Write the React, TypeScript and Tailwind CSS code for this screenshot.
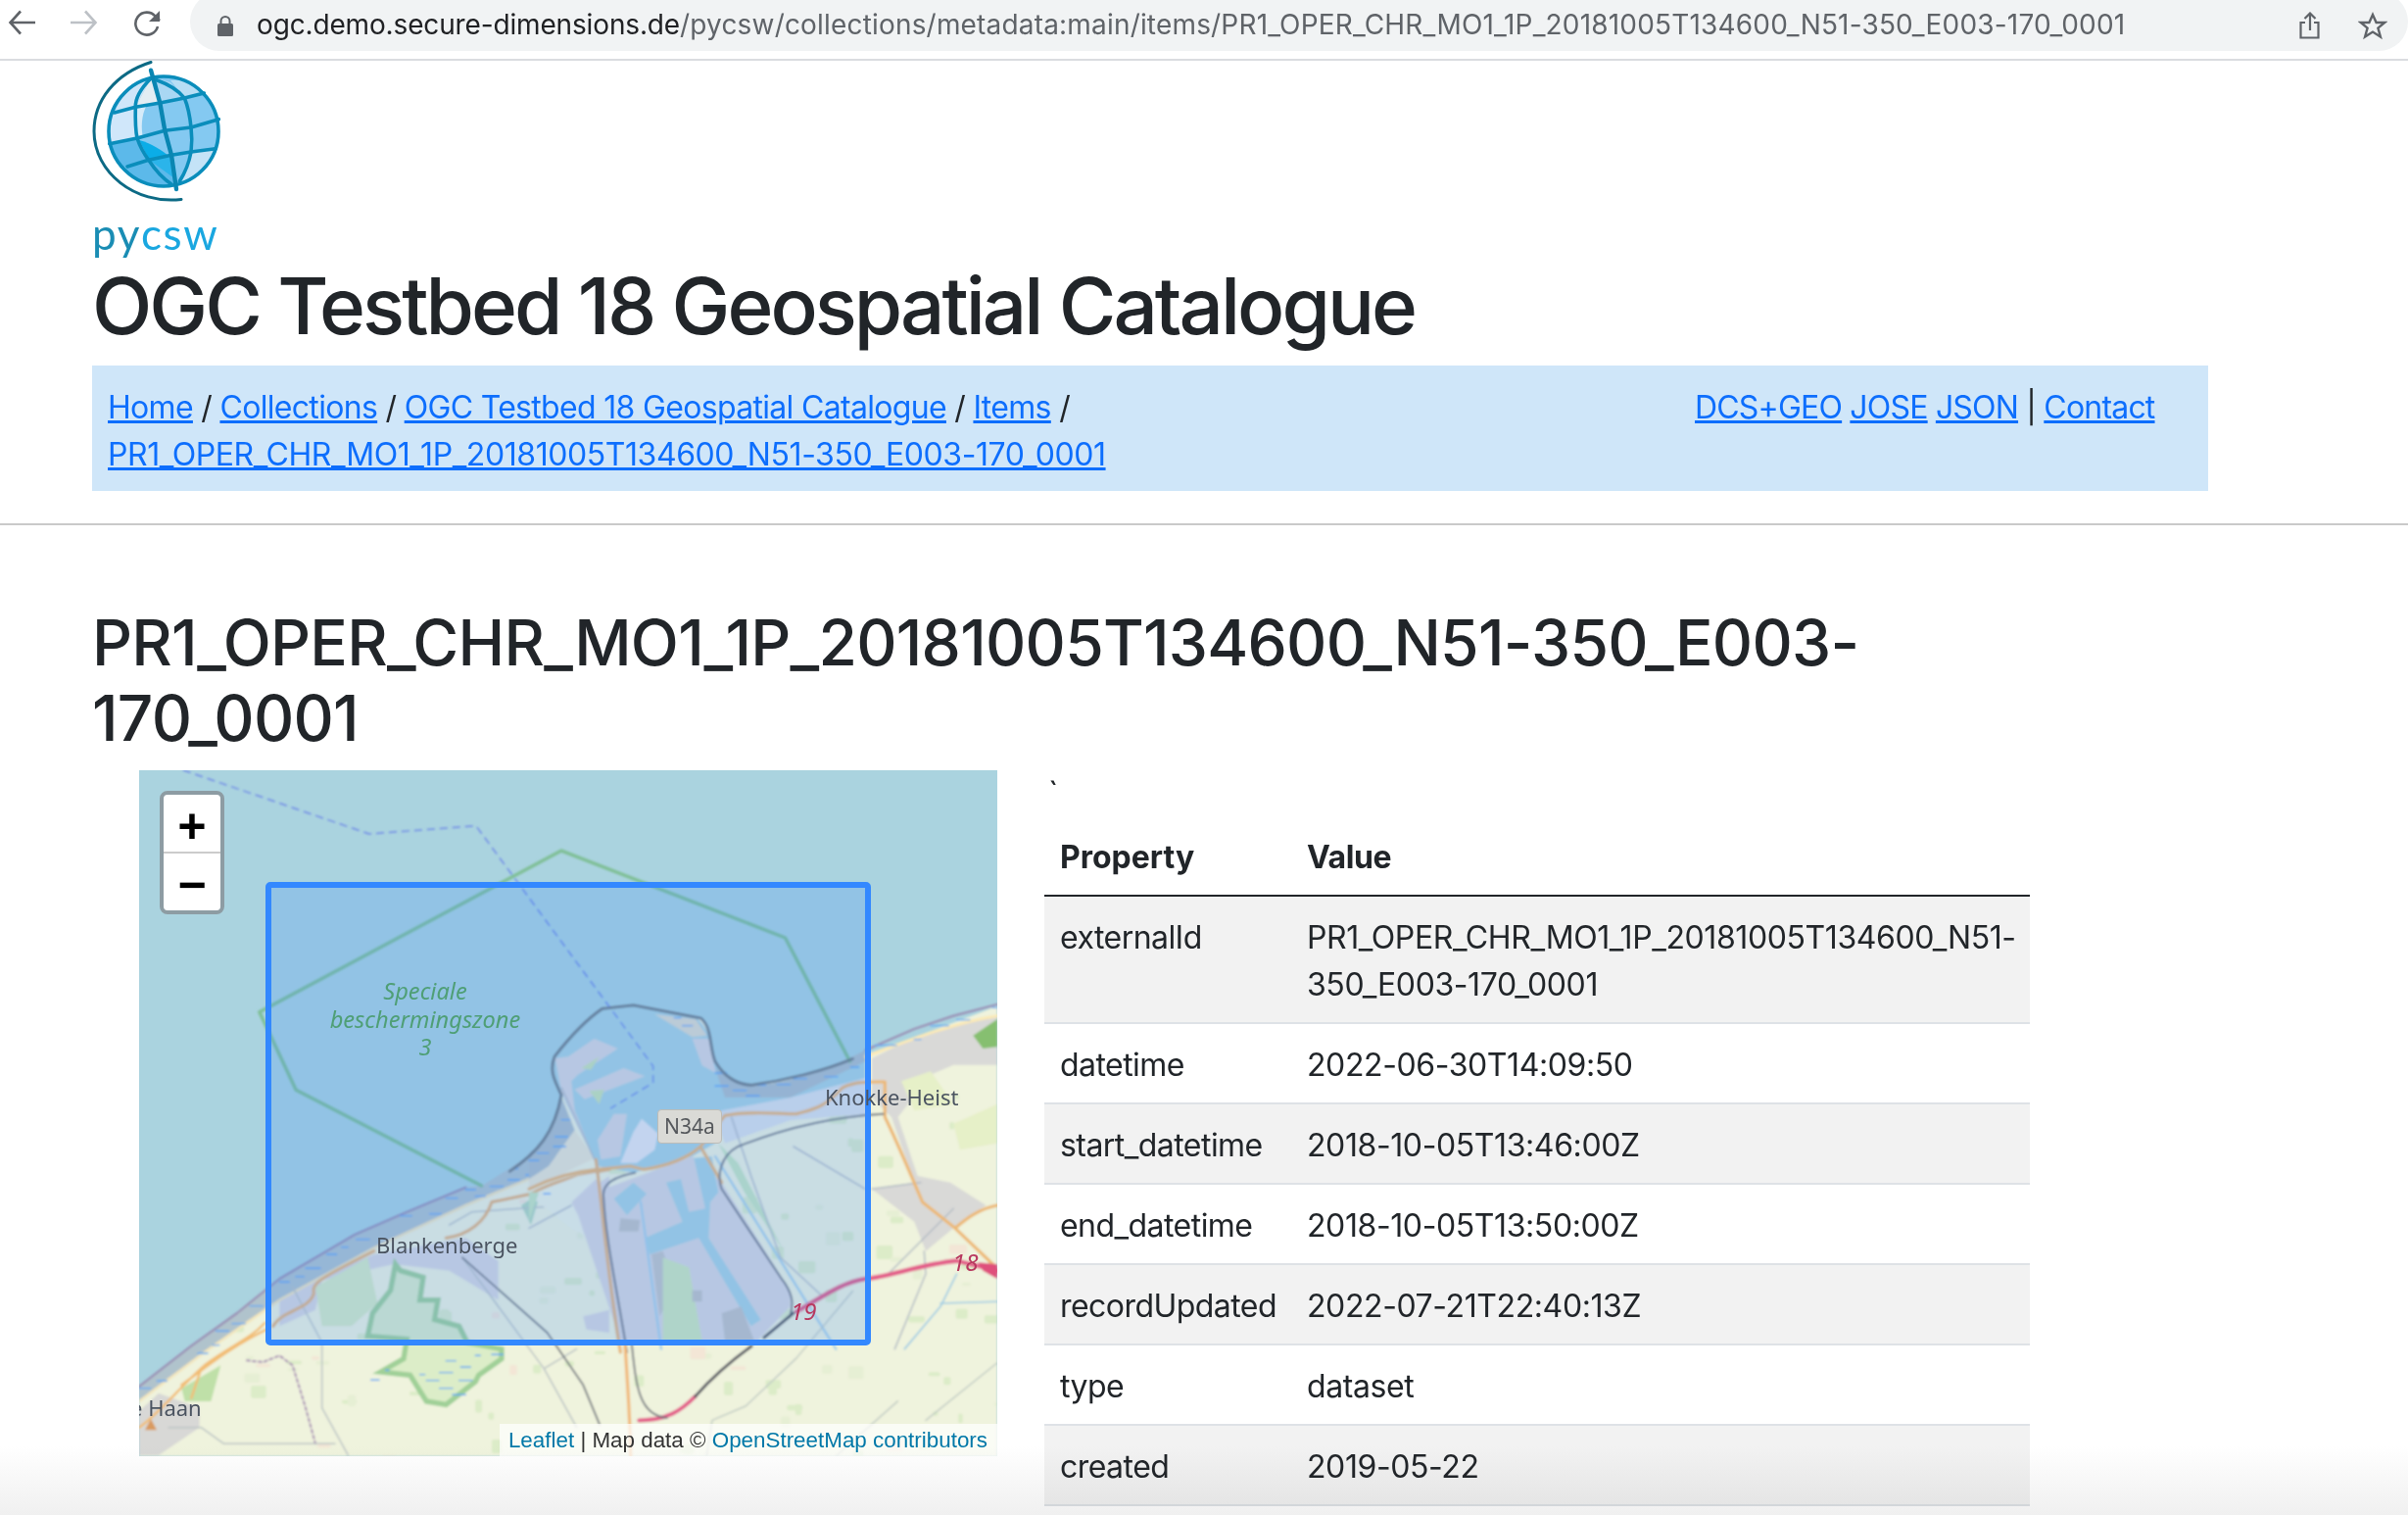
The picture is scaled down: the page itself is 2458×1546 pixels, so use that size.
const FONT = "font-['Inter','Liberation_Sans',sans-serif]";

const ROWS = [
  ["externalId", "PR1_OPER_CHR_MO1_1P_20181005T134600_N51-350_E003-170_0001"],
  ["datetime", "2022-06-30T14:09:50"],
  ["start_datetime", "2018-10-05T13:46:00Z"],
  ["end_datetime", "2018-10-05T13:50:00Z"],
  ["recordUpdated", "2022-07-21T22:40:13Z"],
  ["type", "dataset"],
  ["created", "2019-05-22"],
];

// little land-use blobs scattered over the map
const PATCHES: { x: number; y: number; w: number; h: number; c: string }[] = [];
let seed = 17;
const rnd = () => {
  seed = (seed * 16807) % 2147483647;
  return seed / 2147483647;
};
for (let i = 0; i < 150; i++) {
  const k = rnd();
  PATCHES.push({
    x: rnd() * 876,
    y: 330 + rnd() * 370,
    w: 4 + rnd() * 14,
    h: 3 + rnd() * 11,
    c: k < 0.75 ? "#dcecc8" : k < 0.9 ? "#e6efd4" : "#f3e6d6",
  });
}

const LAND =
  "M21 1300 250 1100 440 975 630 880 680 850C730 810 760 770 772 690 760 660 750 640 760 610 790 565 820 530 845 510L900 503 1020 530C1040 550 1035 590 1045 620 1060 650 1080 668 1110 670 1170 660 1240 640 1290 615L1400 570 1547 505V1445H21Z";

function Line({ d, c, w, dash }: { d: string; c: string; w: number; dash?: string }) {
  return <path d={d} fill="none" stroke={c} strokeWidth={w} strokeDasharray={dash} strokeLinecap="round" strokeLinejoin="round" vectorEffect="non-scaling-stroke" />;
}

function BrowserBar() {
  return (
    <div className="flex h-[62px] border-b-2 border-[#dadce0] bg-white overflow-hidden">
      <div className="flex w-[194px] shrink-0 items-start pt-[10px] pl-[8px] gap-[36px]">
        <svg width="28" height="26" viewBox="0 0 28 26" fill="none" stroke="#5f6368" strokeWidth="2.6">
          <path d="M28 13H3M13 1.5 2.5 13 13 24.5" />
        </svg>
        <svg width="28" height="26" viewBox="0 0 28 26" fill="none" stroke="#bdc1c6" strokeWidth="2.6">
          <path d="M0 13h25M15 1.5 25.5 13 15 24.5" />
        </svg>
        <svg width="28" height="27" viewBox="0 0 28 27" fill="none" stroke="#5f6368" strokeWidth="2.6">
          <path d="M25 17a11.5 11.5 0 1 1-2.5-10.5L27 11" />
          <path d="M27 1v11H16" fill="#5f6368" stroke="none" />
        </svg>
      </div>
      <div className="flex h-[60px] flex-1 -mt-2 items-center rounded-full bg-[#f1f3f4] pt-2 pl-[28px] pr-[20px]">
        <svg width="16" height="21" viewBox="0 0 16 21" className="shrink-0">
          <rect x="0" y="8" width="16" height="13" rx="1.5" fill="#5f6368" />
          <path d="M3.5 9V5.5a4.5 4.5 0 0 1 9 0V9" fill="none" stroke="#5f6368" strokeWidth="2" />
        </svg>
        <div className={`ml-[24px] -mt-[3px] flex-1 whitespace-nowrap text-[28px] tracking-[0.18px] text-[#5f6368] ${FONT}`}>
          <span className="tracking-[-0.15px] text-[#202124]">ogc.demo.secure-dimensions.de</span>
          /pycsw/collections/metadata:main/items/PR1_OPER_CHR_MO1_1P_20181005T134600_N51-350_E003-170_0001
        </div>
        <svg width="24" height="28" viewBox="0 0 24 28" fill="none" stroke="#5f6368" strokeWidth="2.2" className="shrink-0">
          <path d="M7 11H2.5v15.5h18V11H16M12 19V2M6.5 7 12 1.5 17.5 7" />
        </svg>
        <svg width="30" height="29" viewBox="0 0 30 29" fill="none" stroke="#5f6368" strokeWidth="2.4" className="ml-[37px] mr-[1px] shrink-0">
          <path d="m15 3 3.6 8h8.6l-6.8 5.6 2.5 8.9L15 20.6l-7.9 4.9 2.5-8.9L2.8 11h8.6z" />
        </svg>
      </div>
    </div>
  );
}

function Logo() {
  return (
    <div className="flex flex-col">
      <svg width="134" height="146" viewBox="0 0 134 146">
        <defs>
          <clipPath id="globe">
            <circle cx="73" cy="72" r="57" />
          </clipPath>
        </defs>
        <path d="M60 1.5C24 13 2 40 2 72c0 42 42 75 89 69.5" fill="none" stroke="#0c6a85" strokeWidth="3" strokeLinecap="round" />
        <g clipPath="url(#globe)">
          <rect x="0" y="0" width="134" height="146" fill="#84c9f1" />
          <path d="M22.7 53 44.3 47.3 60 18C40 24 28 38 22.7 53Z" fill="#cfe6f9" />
          <path d="M22.7 53 44.3 47.3 46 79 10 86 14 62Z" fill="#d0e7fa" />
          <path d="M60 18 44.3 47.3 69.3 43 62 12Z" fill="#e3edf3" />
          <path d="M66 18 69.3 43 94.3 38 80 22Z" fill="#a9d7f3" />
          <path d="M94.3 38 114 33 96 20 80 20Z" fill="#b7def5" />
          <path d="M44.3 47.3 56 45C50 55 50 70 52 78L46 79Z" fill="#d6ebf9" />
          <path d="M10 86 46 79 57.7 101.3 36 108 20 110Z" fill="#5cb9ea" />
          <path d="M28 112 57.7 101.3 81 126 60 132Z" fill="#5cb9ea" />
          <path d="M57.7 101.3 81 96.3 86 131 81 126Z" fill="#5cb9ea" />
          <path d="M48 81C60 84 72 92 78 97L58 101Z" fill="#0bade7" />
          <path d="M58 101 80 97 84 120Z" fill="#2bb4ea" />
          <path d="M89 123 101 93 126 90 108 122Z" fill="#c4e3f7" />
        </g>
        <g fill="none" stroke="#0a8dbb" strokeWidth="3.6" strokeLinecap="round" strokeLinejoin="round">
          <circle cx="73" cy="72" r="56" />
          <path d="M60 18C50 28 44 38 44.3 47.3 44 60 44 70 46 79 49 88 53 95 57.7 101.3 64 111 72 120 81 126" />
          <path d="M66 19.7C78 24 88 30 94.3 38 98 47 100 58 101 68 102 76 102 85 101 93 99 104 95 114 89.3 123" />
          <path d="M22.7 53 44.3 47.3 69.3 43 94.3 38 114.3 33" />
          <path d="M17.7 84.7 46 79 74.3 71.3 101 68 129.3 59.7" />
          <path d="M36 108 57.7 101.3 81 96.3 101 93 126 89.7" />
        </g>
        <path d="M60 9.7 69.3 43 74.3 71.3 81 96.3 86 131" fill="none" stroke="#0a86b2" strokeWidth="4.4" strokeLinecap="round" strokeLinejoin="round" />
      </svg>
      <div className="flex h-[56px] pt-[6px] font-['Lato',sans-serif] text-[44px] leading-[48px] font-normal tracking-[1.6px]">
        <span className="text-[#1a8db4]">py</span>
        <span className="text-[#1aa7e0]">csw</span>
      </div>
    </div>
  );
}

function MapDrawing() {
  return (
    <svg width="876" height="700" viewBox="0 0 876 700" className="block">
      <defs>
        <filter id="soft" x="-5%" y="-5%" width="110%" height="110%">
          <feGaussianBlur stdDeviation="0.9" />
        </filter>
        <clipPath id="landclip">
          <path d={LAND} transform="scale(0.574 0.4885) translate(-21 -12)" />
        </clipPath>
      </defs>
      <g filter="url(#soft)">
        <g transform="scale(0.574 0.4885) translate(-21 -12)">
          <path d={LAND} fill="#eff3dd" />
        </g>
        <g clipPath="url(#landclip)">
          {PATCHES.map((p, i) => (
            <rect key={i} x={p.x} y={p.y} width={p.w} height={p.h} rx="2" fill={p.c} />
          ))}
        </g>

        {/* De Haan, dunes and the forest at the left */}
        <g transform="translate(0 394) scale(0.3333)">
          <path d="M0 780 60 725 185 770V830L60 915H0Z" fill="#d8d8d6" />
          <path d="M130 710 250 640 220 750 140 750Z" fill="#bfe0a8" />
          <path d="M430 420 720 300 1000 250 1100 320V440L950 350 780 330 560 380 540 470 430 520Z" fill="#d9d8dd" />
          <path d="M1340 130 1440 60V280L1390 240ZM1360 490 1440 470V540L1370 530Z" fill="#d9d8dd" />
          <path d="M540 400 700 310 730 450 650 520 560 520Z" fill="#d8ebc3" />
          <path d="M1170 150 1230 110 1200 210Z" fill="#b2d8bd" />
          <path d="M0 705 160 580 300 480 430 375 660 240 810 175 1000 95 1050 90 1130 40 1190 0H1280L1240 50 1000 150 720 280 430 440 200 600 0 750Z" fill="#b0c3cc" />
          <path d="M0 750 200 600 430 440 720 280 1000 150 1240 50" fill="none" stroke="#f3e6bd" strokeWidth="8" />
          <path
            d="M785 330 800 350 870 370 860 440 915 440 905 500 980 520 1005 570 1110 590 1110 620 1040 670 1030 690 940 760 880 750 830 670 740 660 810 620 820 560 700 550 715 480 770 410Z"
            fill="#dcedc8"
            stroke="#a0d098"
            strokeWidth="16"
          />
          <Line d="M330 625 380 630 430 610 470 640 510 770 540 880" c="#a88fb4" w="2" dash="3 3" />
          <Line d="M0 705 160 580 300 480 430 375 660 240 810 175 1000 95" c="#9a8fb4" w="2.2" />
          <Line d="M470 400 560 570 560 770 640 915M990 310 1240 650 1340 830M1240 650 1340 590M90 830 190 830 260 880 600 880M950 210 1020 170 1310 150" c="#bcc4c4" w="1.5" />
          <Line d="M990 310 1250 540 1360 700 1410 820" c="#70747c" w="1.8" />
          <Line d="M0 830C60 790 130 700 200 640 280 580 340 560 385 510M130 700C200 650 270 590 390 530M190 650 160 740" c="#f2bd74" w="2.4" />
          <Line d="M410 520C440 470 520 470 535 420 530 390 540 380 720 290M940 250C1010 240 1060 200 1080 140L1200 115C1280 70 1380 50 1440 40" c="#e6b67c" w="3.2" />
          <Line d="M0 710H35M55 688H85M180 603H210M225 578H245M235 535H275M285 512H325M340 458H378M430 385H460M480 368H505M510 343H555M575 300H605M620 278H640M665 254H705M800 182H835M890 176H925M940 128H975M1000 102H1030M1030 122H1060M1075 92H1115M1130 72H1165M1145 38H1160M1185 57H1200M1240 115H1255" c="#5aa6f4" w="1.4" />
          <Line d="M710 685H735M755 655H765M860 668H875M920 662H960M985 645H1015M880 686H918M920 710H960M960 730H1000M980 686H1020M940 626H970M1080 607H1115M1030 610H1045" c="#5aa6f4" w="1.4" />
          <path d="M18 838 36 804 54 838Z" fill="#d99a5e" />
        </g>

        {/* the port of Zeebrugge and Knokke */}
        <g transform="translate(398 214) scale(0.3333)">
          <path d="M1050 240 1190 170 1434 110V260L1300 260 1230 290 1130 420 1190 600 1290 620 1400 690 1300 760 1215 830 1180 740 1050 640 1180 620 1110 420 1050 360Z" fill="#d9d9d7" />
          <path d="M1140 310 1230 280 1300 380 1180 400ZM1300 440 1434 380V500L1320 520Z" fill="#e6f0c8" />
          <path d="M1360 170 1434 120V205L1390 210Z" fill="#86bf70" />
          <path d="M100 350C80 300 60 270 75 230L220 88 320 78 510 115C545 140 560 190 570 240L600 300 680 340 900 300 1030 240V300L900 390 600 400 570 500 500 540 320 590 210 570Z" fill="#aad3df" />
          <path d="M100 360 140 460 60 570 0 610V530C40 510 80 430 100 360ZM570 270C600 290 640 320 690 322 780 320 900 280 1030 215V250L800 360H600Z" fill="#aebfc8" />
          <path d="M140 460 200 545 0 645V610L60 570Z" fill="#e9e6d2" />
          <path d="M590 400 800 360 1030 300V410L800 430 600 500 570 420Z" fill="#dbe1e6" />
          <path d="M80 240 120 235 200 180 272 210 150 290 130 310 140 400 205 560 100 345Z" fill="#d9d8dd" />
          <path d="M140 335 290 270 355 295 170 365Z" fill="#d9d8dd" />
          <path d="M160 270 215 235 190 275ZM185 340 230 335 215 380Z" fill="#c9e4b6" />
          <path d="M210 490 260 410 300 410 280 540 220 550Z" fill="#d9d8dd" />
          <path d="M320 465 345 425 395 470 385 520 330 560 280 560Z" fill="#e8e8ec" />
          <path d="M385 105 510 120 545 170 500 175Z" fill="#dedccd" />
          <path d="M500 180 550 180 572 285 530 262Z" fill="#d9d8dd" />
          <path d="M0 660 150 600 205 590 180 720 220 810 130 760Z" fill="#eef3e2" />
          <path d="M230 640 500 540 590 620 800 950V1000L700 1105H280L150 720 130 680 205 610Z" fill="#d9d8dd" />
          <path d="M505 545 560 540 580 650 555 680 550 790 710 1040 680 1060 520 790 370 840 355 790 470 740 420 620 465 610 490 710 540 700Z" fill="#aad3df" />
          <path d="M320 620 360 655 300 720 260 670Z" fill="#aad3df" />
          <path d="M375 840 410 830 450 940 400 1030Z" fill="#c4c6c6" />
          <path d="M410 850 490 880 530 1105H410Z" fill="#cfe8bc" />
          <path d="M590 1020 650 1000 690 1105H600ZM500 950 530 950 530 985 500 985ZM280 730 340 735 335 770 275 770Z" fill="#c2c4c4" />
          <path d="M0 650 30 650 0 740ZM580 500 640 560 780 830 660 650Z" fill="#c8e6c0" />
          <Line d="M342 680 405 1130M570 540 940 1130" c="#a9d1e6" w="2.4" />
          <Line d="M620 420 680 600 770 850 900 970M810 510 1030 640M1050 640 1200 620M1300 700 1100 900M1210 830 1215 900 1120 1130M100 330 210 570M0 760 130 690" c="#b4bcc4" w="1.5" />
          <Line d="M1310 900 1260 1000 1150 1130M1260 990 1434 985" c="#9ccbe4" w="1.6" />
          <Line d="M1030 235C1150 190 1300 130 1434 110" c="#fbe9b6" w="3" />
          <Line d="M1030 215 1180 150 1300 110 1434 75" c="#9a8fb4" w="2.2" />
          <Line d="M1060 200H1125M1180 182H1200M1230 140H1285M1310 122H1350M1420 85H1434M570 285H605M570 325H610M625 338H665M665 355H705M690 322H725M760 320H800M810 302H850M905 296H945M985 267H1010M445 116H465M470 140H500M100 428H125M80 480H118M75 510H112M25 530H60M0 553H30M45 655H65" c="#5aa6f4" w="1.4" />
          <Line d="M0 640C80 600 150 585 210 580L310 570 350 580C420 570 480 550 525 510L600 415C680 400 750 410 820 410 870 395 900 395 960 330 1000 310 1040 312 1090 312V420C1130 500 1170 600 1205 680L1305 760 1420 870M1305 760C1340 730 1380 700 1434 690M525 510 590 620" c="#ecb874" w="3.2" />
          <Line d="M205 550C225 700 240 900 280 1140" c="#e6b67c" w="3.2" />
          <Line d="M1085 410C900 420 740 470 640 510 585 540 575 600 590 640L770 910C810 960 810 990 800 1030" c="#6e7480" w="2" />
          <Line d="M325 590C270 600 225 620 228 660 235 800 270 950 300 1140" c="#6e7480" w="2" />
          <Line d="M820 1015C900 970 960 925 1030 915 1100 910 1200 870 1310 860L1434 890" c="#e3608a" w="4.6" />
          <Line d="M720 1095 810 1020" c="#4d4f58" w="3" />
          <path d="M1375 865 1434 870V915L1390 890Z" fill="#df4f7c" />
        </g>

        <g transform="scale(0.574 0.4885) translate(-21 -12)">
          <Line d="M910 1370C960 1370 985 1350 1010 1320" c="#e3608a" w="4" />
          <Line d="M1010 1320C1040 1280 1075 1245 1110 1215" c="#5a5c64" w="3" />
          <Line d="M885 1210C890 1300 895 1380 895 1445" c="#f1b878" w="3.2" />
          <Line d="M897 1210C905 1300 910 1360 960 1365" c="#70747c" w="1.8" />
          <Line d="M1290 1100 1190 1240 1100 1340 1040 1370 1030 1445M1370 1330 1260 1445M1547 1250 1420 1370" c="#c2ccc4" w="1.5" />
          <Line d="M630 880 300 680 235 517 772 180 1170 362 1285 620" c="#7fbf96" w="3.4" />
          <Line d="M100 12 430 145 620 128 935 630V665L860 718" c="#6f8ae6" w="1.5" dash="7 6" />
          <Line d="M680 850C730 810 760 770 772 690 760 660 750 640 760 610 790 565 820 530 845 510L900 503 1020 530C1040 550 1035 590 1045 620 1060 650 1080 668 1110 670 1170 660 1240 640 1290 615" c="#6f7c84" w="2.8" />
        </g>
      </g>
      <rect x="132" y="117" width="612" height="467" rx="2" fill="#3388ff" fillOpacity="0.2" stroke="#3388ff" strokeWidth="6" />
    </svg>
  );
}

function MapPanel() {
  return (
    <div className="relative h-[700px] w-[876px] shrink-0 overflow-hidden bg-[#aad3df] font-['Noto_Sans',sans-serif]">
      <MapDrawing />

      <div className="absolute left-[192px] top-[211px] w-[200px] text-center text-[23.6px] leading-[28.5px] text-[#4f9f76] italic">
        <div>Speciale</div>
        <div>beschermingszone</div>
        <div>3</div>
      </div>
      <div className="absolute left-[242px] top-[468px] text-[22px] leading-[32px] text-[#4a5360]">Blankenberge</div>
      <div className="absolute left-[700px] top-[317px] text-[22px] leading-[32px] text-[#4a5360]">Knokke-Heist</div>
      <div className="absolute left-0 top-[634px] w-[80px] overflow-hidden text-[22px] leading-[32px] whitespace-nowrap text-[#4a5360]">
        <span className="-ml-[9px]">e Haan</span>
      </div>
      <div className="absolute left-[529px] top-[346px] flex h-[35px] w-[66px] items-center justify-center rounded-[4px] border border-[#bcbcb8] bg-[#dadad6] text-[21px] text-[#55585c]">N34a</div>
      <div className="absolute left-[830px] top-[488px] text-[24px] leading-[28px] text-[#b8385f] italic">18</div>
      <div className="absolute left-[665px] top-[538px] text-[24px] leading-[28px] text-[#b8385f] italic">19</div>

      <div className="absolute left-[21px] top-[21px] flex w-[66px] flex-col rounded-[8px] border-4 border-[#8d9ca3] bg-white font-['Liberation_Mono',monospace] text-black">
        <div className="flex h-[60px] items-center justify-center border-b-2 border-[#cccccc] pt-[14px] text-[50px] leading-[50px] font-bold">+</div>
        <div className="flex h-[58px] items-center justify-center pt-[14px] text-[50px] leading-[50px] font-bold">−</div>
      </div>

      <div className="absolute bottom-0 right-0 flex h-[33px] w-[508px] items-center justify-end whitespace-nowrap bg-white/70 pr-[10px] font-['Liberation_Sans',sans-serif] text-[22.4px] text-[#333333]">
        <span className="text-[#0078a8]">Leaflet</span>
        <span>&nbsp;| Map data ©&nbsp;</span>
        <span className="text-[#0078a8]">OpenStreetMap contributors</span>
      </div>
    </div>
  );
}

function PropTable() {
  return (
    <div className="w-[1006px]">
      <div className="h-[48px] pl-[4px] text-[32px] leading-[48px]">`</div>
      <table className="w-full table-fixed border-collapse text-[32px] leading-[48px] tracking-[-0.4px]">
        <thead>
          <tr className="border-b-2 border-[#212529]">
            <th className="h-[80px] w-[252px] px-4 pt-[2px] text-left font-bold tracking-normal">Property</th>
            <th className="h-[80px] px-4 pt-[2px] text-left font-bold tracking-[-0.4px]">Value</th>
          </tr>
        </thead>
        <tbody>
          {ROWS.map((r, i) => (
            <tr key={r[0]} className={`border-b-2 border-[#dee2e6] ${i % 2 === 0 ? "bg-[#f2f2f2]" : "bg-white"}`}>
              <td className="px-4 pt-[18px] pb-[14px] align-top tracking-[-0.55px] whitespace-nowrap">{r[0]}</td>
              <td className="px-4 pt-[18px] pb-[14px] align-top">{r[1]}</td>
            </tr>
          ))}
        </tbody>
      </table>
    </div>
  );
}

export default function App() {
  return (
    <div className={`relative h-[1546px] w-[2458px] overflow-hidden bg-white text-[#212529] ${FONT}`}>
      <BrowserBar />
      <div className="px-[94px]">
        <Logo />
        <h1 className="text-[80px] leading-[96px] font-medium tracking-[-3px]">OGC Testbed 18 Geospatial Catalogue</h1>
        <div className="mt-[13px] flex h-[128px] w-[2160px] bg-[#cfe6f9] px-4 pt-[19px] text-[32px] leading-[48px]">
          <div className="w-[1620px]">
            <div className="tracking-[-0.68px]">
              <a className="text-[#0d6efd] underline">Home</a> / <a className="text-[#0d6efd] underline">Collections</a> /{" "}
              <a className="text-[#0d6efd] underline">OGC Testbed 18 Geospatial Catalogue</a> / <a className="text-[#0d6efd] underline">Items</a> /
            </div>
            <a className="tracking-[-0.43px] text-[#0d6efd] underline">PR1_OPER_CHR_MO1_1P_20181005T134600_N51-350_E003-170_0001</a>
          </div>
          <div className="tracking-[-0.8px]">
            <a className="text-[#0d6efd] underline">DCS+GEO</a> <a className="text-[#0d6efd] underline">JOSE</a>{" "}
            <a className="text-[#0d6efd] underline">JSON</a> | <a className="text-[#0d6efd] underline">Contact</a>
          </div>
        </div>
      </div>
      <hr className="mt-[33px] border-t-2 border-[#c9c9c9]" />
      <div className="px-[94px]">
        <h2 className="mt-[81px] w-[1900px] text-[64px] leading-[77px] font-medium tracking-[-0.73px]">
          PR1_OPER_CHR_MO1_1P_20181005T134600_N51-350_E003-170_0001
        </h2>
        <div className="mt-[15px] flex pl-[48px]">
          <MapPanel />
          <div className="ml-[48px]">
            <PropTable />
          </div>
        </div>
      </div>
      <div className="absolute inset-x-0 bottom-0 h-[70px] bg-gradient-to-b from-white to-[#f0f0f0] mix-blend-multiply" />
    </div>
  );
}
